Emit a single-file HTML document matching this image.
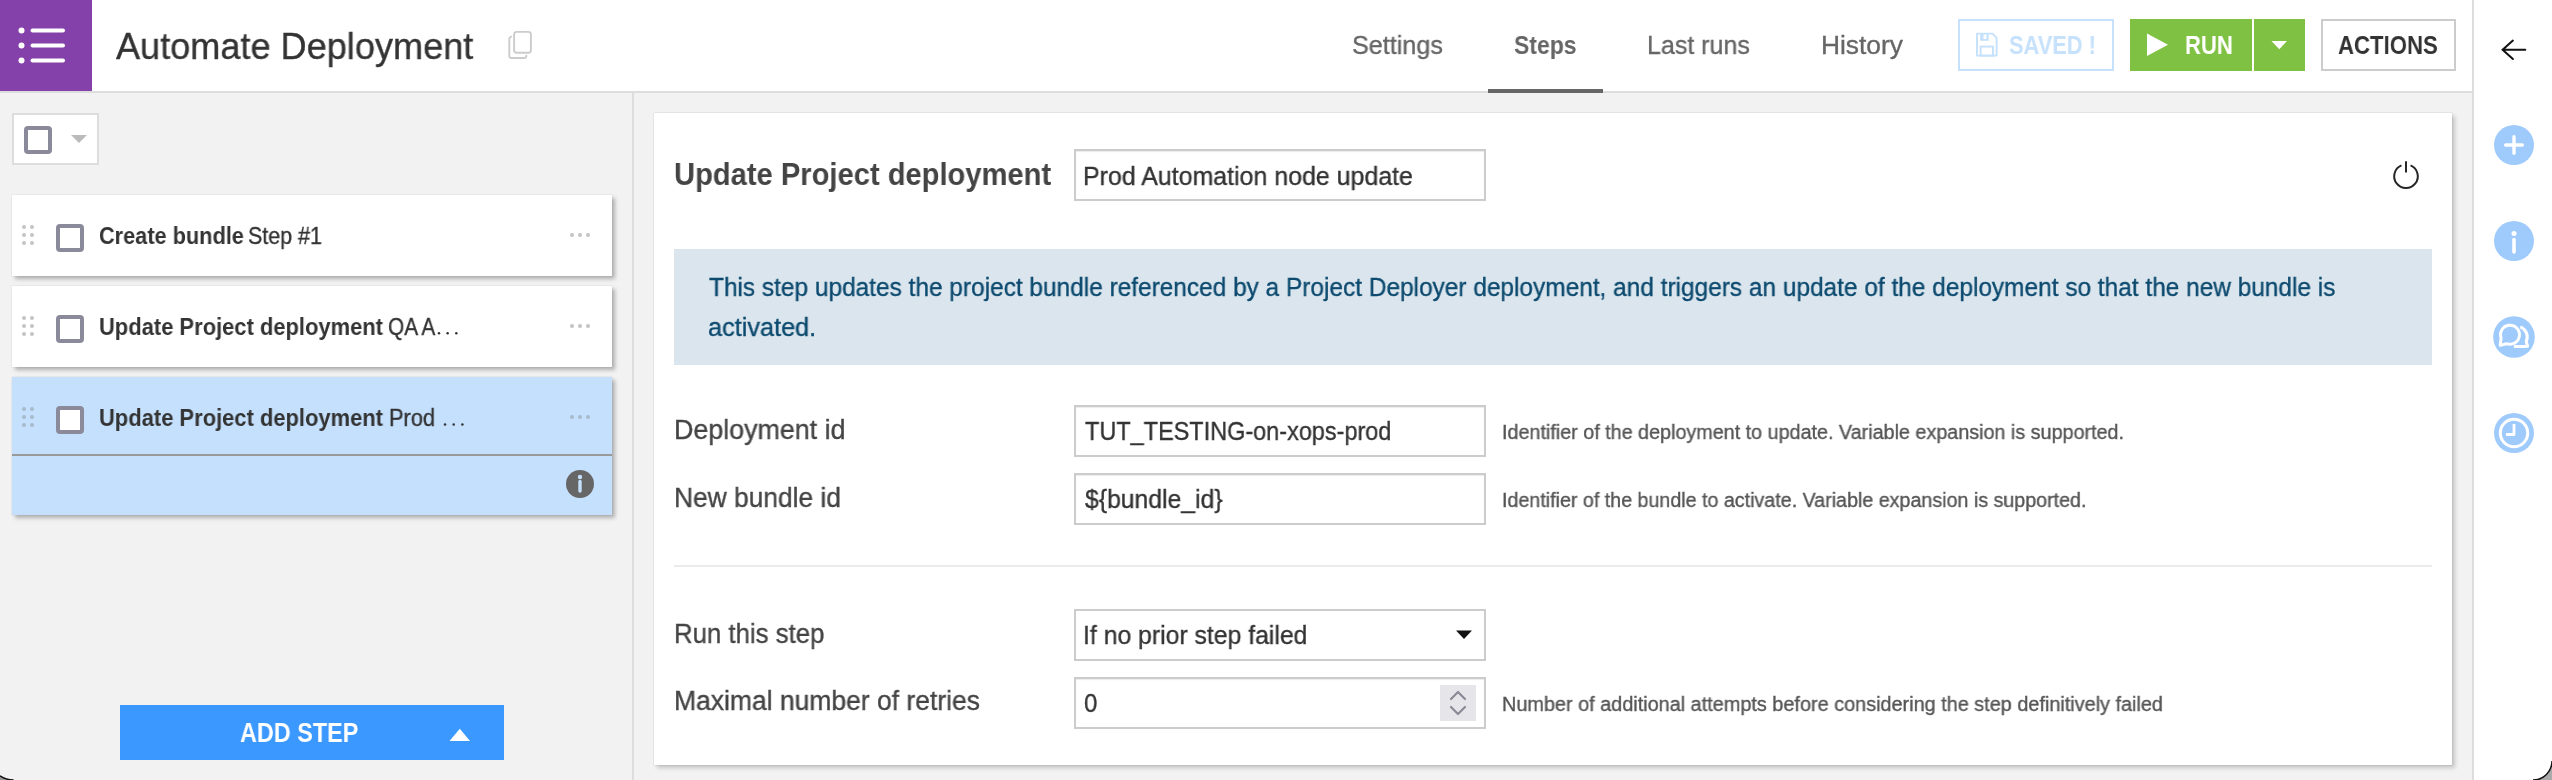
<!DOCTYPE html>
<html><head><meta charset="utf-8"><title>Automate Deployment</title>
<style>
*{box-sizing:border-box}
html,body{margin:0;padding:0}
body{width:2552px;height:780px;overflow:hidden;position:relative;background:#f2f2f2;font-family:"Liberation Sans",sans-serif}
.a{position:absolute}
.t{position:absolute;white-space:nowrap;transform-origin:0 0;will-change:transform;-webkit-text-stroke:0.35px currentColor}
.t b{font-weight:700;-webkit-text-stroke:0}
.bw{-webkit-text-stroke:0!important}
</style></head>
<body>
<!-- header -->
<div class="a" style="left:0;top:0;width:2472px;height:93px;background:#fff;border-bottom:2px solid #ddd"></div>
<div class="a" style="left:0;top:0;width:92px;height:91px;background:#8441a9"></div>
<svg class="a" style="left:0;top:0" width="92" height="91" viewBox="0 0 92 91">
 <g fill="#fff"><circle cx="21.5" cy="30.5" r="3"/><circle cx="21.5" cy="45.5" r="3"/><circle cx="21.5" cy="60.5" r="3"/></g>
 <g stroke="#fff" stroke-width="4" stroke-linecap="round"><line x1="32.5" y1="30.5" x2="63" y2="30.5"/><line x1="32.5" y1="45.5" x2="63" y2="45.5"/><line x1="32.5" y1="60.5" x2="63" y2="60.5"/></g>
</svg>
<!-- copy icon -->
<svg class="a" style="left:500px;top:24px" width="40" height="40" viewBox="0 0 40 40">
 <rect x="14.1" y="7.9" width="16.8" height="20.9" rx="2.5" fill="none" stroke="#ccc" stroke-width="1.9"/>
 <path d="M11.2 12.6 Q 9.3 13.2 9.3 15.2 V 32 Q 9.3 34 11.3 34 H 24.4 Q 26.3 34 26.4 31.6" fill="none" stroke="#ccc" stroke-width="1.9" stroke-linecap="round"/>
</svg>
<!-- tab underline -->
<div class="a" style="left:1488px;top:89px;width:115px;height:4px;background:#666"></div>
<!-- saved button -->
<div class="a" style="left:1958px;top:19px;width:156px;height:52px;border:2px solid #c5e1fb"></div>
<svg class="a" style="left:1974px;top:32px" width="26" height="26" viewBox="0 0 26 26">
 <path d="M3 1.6 H18.5 L22.6 5.8 V23.6 H3 Z" fill="none" stroke="#c5e1fb" stroke-width="1.9" stroke-linejoin="round"/>
 <rect x="6.2" y="2" width="8.5" height="6.8" fill="#c5e1fb"/>
 <rect x="9.5" y="2.5" width="3" height="4.5" fill="#fff"/>
 <rect x="6.6" y="14.6" width="12.4" height="9" fill="none" stroke="#c5e1fb" stroke-width="1.9"/>
</svg>
<!-- run button -->
<div class="a" style="left:2130px;top:19px;width:122px;height:52px;background:#7fc142"></div>
<div class="a" style="left:2254px;top:19px;width:51px;height:52px;background:#7fc142"></div>
<svg class="a" style="left:2146px;top:33px" width="24" height="24" viewBox="0 0 24 24"><path d="M1 0.5 L22 11.8 L1 23 Z" fill="#fff"/></svg>
<svg class="a" style="left:2271px;top:40px" width="17" height="10" viewBox="0 0 17 10"><path d="M0.5 1 H16 L8.3 9.3 Z" fill="#fff"/></svg>
<!-- actions -->
<div class="a" style="left:2321px;top:19px;width:135px;height:52px;border:2px solid #ccc"></div>
<!-- right sidebar -->
<div class="a" style="left:2472px;top:0;width:80px;height:780px;background:#fff;border-left:2px solid #ddd"></div>
<svg class="a" style="left:2498px;top:36px" width="32" height="28" viewBox="0 0 32 28">
 <path d="M4.8 13.8 H27.3 M14.9 4.6 L4.6 13.8 L14.9 23" fill="none" stroke="#111" stroke-width="2" stroke-linecap="round"/>
</svg>
<svg class="a" style="left:2492px;top:120px" width="44" height="340" viewBox="0 0 44 340">
 <g fill="#9fcafc"><circle cx="22" cy="25" r="20"/><circle cx="22" cy="121" r="20"/><circle cx="22" cy="217" r="20.8"/><circle cx="22" cy="313" r="20"/></g>
 <path d="M13.7 25 H30.3 M22 16.7 V33.3" stroke="#fff" stroke-width="3.4" stroke-linecap="round"/>
 <circle cx="22" cy="113.5" r="2.5" fill="#fff"/>
 <path d="M22 119.5 V132" stroke="#fff" stroke-width="3.6" stroke-linecap="round"/>
 <g fill="none" stroke="#fff" stroke-width="3" stroke-linejoin="round">
  <path d="M9.07 218.05 A9.5 9.5 0 1 1 14.75 223.7 L8.2 225.2 Z"/>
  <path d="M28.3 206.8 A10.8 10.8 0 0 1 34.2 221.5 L35.6 226.2 Q 28 226.6 21.8 226.2"/>
 </g>
 <circle cx="22" cy="313" r="13.7" fill="none" stroke="#fff" stroke-width="3"/>
 <path d="M22 304 V314.5 H14" fill="none" stroke="#fff" stroke-width="2.8" stroke-linejoin="round"/>
</svg>
<!-- left panel divider -->
<div class="a" style="left:632px;top:93px;width:2px;height:687px;background:#ddd"></div>
<!-- select all -->
<div class="a" style="left:12px;top:113px;width:87px;height:52px;background:#fff;border:2px solid #ddd"></div>
<div class="a" style="left:24px;top:126px;width:28px;height:28px;border:4px solid #8b8a9b;border-radius:4px;background:#fff"></div>
<svg class="a" style="left:71px;top:135px" width="16" height="8" viewBox="0 0 16 8"><path d="M0 0 H16 L8 8 Z" fill="#bbb"/></svg>
<!-- cards -->
<div class="a" style="left:12px;top:195px;width:600px;height:81px;background:#fff;box-shadow:3px 3px 4px rgba(0,0,0,.27),0 0 1px rgba(0,0,0,.2)"></div>
<div class="a" style="left:12px;top:286px;width:600px;height:81px;background:#fff;box-shadow:3px 3px 4px rgba(0,0,0,.27),0 0 1px rgba(0,0,0,.2)"></div>
<div class="a" style="left:12px;top:377px;width:600px;height:138px;background:#c4e0fd;box-shadow:3px 3px 4px rgba(0,0,0,.27),0 0 1px rgba(0,0,0,.2)"></div>
<div class="a" style="left:12px;top:454px;width:600px;height:2px;background:#999"></div>
<svg class="a" style="left:0;top:190px" width="620" height="330" viewBox="0 190 620 330">
 <g fill="#c4c4c4">
  <circle cx="24" cy="227" r="2"/><circle cx="32" cy="227" r="2"/><circle cx="24" cy="235" r="2"/><circle cx="32" cy="235" r="2"/><circle cx="24" cy="243" r="2"/><circle cx="32" cy="243" r="2"/>
  <circle cx="24" cy="318" r="2"/><circle cx="32" cy="318" r="2"/><circle cx="24" cy="326" r="2"/><circle cx="32" cy="326" r="2"/><circle cx="24" cy="334" r="2"/><circle cx="32" cy="334" r="2"/>
  <circle cx="572" cy="235" r="2"/><circle cx="580" cy="235" r="2"/><circle cx="588" cy="235" r="2"/>
  <circle cx="572" cy="326" r="2"/><circle cx="580" cy="326" r="2"/><circle cx="588" cy="326" r="2"/>
 </g>
 <g fill="#a7b9cb">
  <circle cx="24" cy="409" r="2"/><circle cx="32" cy="409" r="2"/><circle cx="24" cy="417" r="2"/><circle cx="32" cy="417" r="2"/><circle cx="24" cy="425" r="2"/><circle cx="32" cy="425" r="2"/>
  <circle cx="572" cy="417" r="2"/><circle cx="580" cy="417" r="2"/><circle cx="588" cy="417" r="2"/>
 </g>
 <circle cx="580" cy="484" r="14" fill="#666"/>
 <circle cx="580" cy="477" r="2.2" fill="#c4e0fd"/>
 <path d="M580 481.5 V491" stroke="#c4e0fd" stroke-width="3.4" stroke-linecap="round"/>
</svg>
<div class="a" style="left:56px;top:224px;width:28px;height:28px;border:4px solid #8b8a9b;border-radius:4px;background:#fff"></div>
<div class="a" style="left:56px;top:315px;width:28px;height:28px;border:4px solid #8b8a9b;border-radius:4px;background:#fff"></div>
<div class="a" style="left:56px;top:406px;width:28px;height:28px;border:4px solid #8b8a9b;border-radius:4px;background:#fff"></div>
<svg class="a" style="left:430px;top:320px" width="40" height="110" viewBox="430 320 40 110">
 <g fill="#333"><circle cx="439" cy="333.2" r="1.25"/><circle cx="447.6" cy="333.2" r="1.25"/><circle cx="456.3" cy="333.2" r="1.25"/>
 <circle cx="445" cy="424.4" r="1.25"/><circle cx="453.7" cy="424.4" r="1.25"/><circle cx="462.4" cy="424.4" r="1.25"/></g>
</svg>
<!-- add step -->
<div class="a" style="left:120px;top:705px;width:384px;height:55px;background:#3b98fe"></div>
<svg class="a" style="left:449px;top:728px" width="22" height="14" viewBox="0 0 22 14"><path d="M0.5 13 H21 L10.8 0.7 Z" fill="#fff"/></svg>
<!-- main card -->
<div class="a" style="left:654px;top:113px;width:1798px;height:652px;background:#fff;box-shadow:3px 3px 4px rgba(0,0,0,.18),0 0 1px rgba(0,0,0,.3)"></div>
<div class="a" style="left:1074px;top:149px;width:412px;height:52px;background:#fff;border:2px solid #ccc;box-shadow:inset 0 1px 1px rgba(0,0,0,.08)"></div>
<svg class="a" style="left:2388px;top:157px" width="36" height="36" viewBox="0 0 36 36">
 <path d="M13.47 8.4 A11.8 11.8 0 1 0 22.53 8.4" fill="none" stroke="#262626" stroke-width="2"/>
 <path d="M18 4.2 V15.4" stroke="#262626" stroke-width="2"/>
</svg>
<div class="a" style="left:674px;top:249px;width:1758px;height:116px;background:#dbe5ed"></div>
<div class="a" style="left:1074px;top:405px;width:412px;height:52px;background:#fff;border:2px solid #ccc;box-shadow:inset 0 1px 1px rgba(0,0,0,.08)"></div>
<div class="a" style="left:1074px;top:473px;width:412px;height:52px;background:#fff;border:2px solid #ccc;box-shadow:inset 0 1px 1px rgba(0,0,0,.08)"></div>
<div class="a" style="left:674px;top:565px;width:1758px;height:2px;background:#ebebeb"></div>
<div class="a" style="left:1074px;top:609px;width:412px;height:52px;background:#fff;border:2px solid #ccc"></div>
<svg class="a" style="left:1455px;top:629px" width="18" height="11" viewBox="0 0 18 11"><path d="M1 1.5 H17 L9 10 Z" fill="#111"/></svg>
<div class="a" style="left:1074px;top:677px;width:412px;height:52px;background:#fff;border:2px solid #ccc;box-shadow:inset 0 1px 1px rgba(0,0,0,.08)"></div>
<div class="a" style="left:1440px;top:685px;width:36px;height:36px;background:#e6e6ea"></div>
<svg class="a" style="left:1440px;top:685px" width="36" height="36" viewBox="0 0 36 36">
 <path d="M11 14 L18 7 L25 14 M11 22 L18 29 L25 22" fill="none" stroke="#8a8a96" stroke-width="2.2" stroke-linecap="round" stroke-linejoin="round"/>
</svg>
<!-- window corners -->
<svg class="a" style="left:0;top:764px" width="20" height="16" viewBox="0 764 20 16">
 <path d="M0 775.8 A 24 24 0 0 0 13.6 780 H0 Z" fill="#9a9a9a"/>
 <path d="M0 775.8 A 24 24 0 0 0 13.6 780" fill="none" stroke="#111" stroke-width="1.5"/>
</svg>
<svg class="a" style="left:2524px;top:752px" width="28" height="28" viewBox="2524 752 28 28">
 <path d="M2552 761 A 19 19 0 0 1 2533 780 H2552 Z" fill="#aaa"/>
 <path d="M2552 761 A 19 19 0 0 1 2533 780" fill="none" stroke="#111" stroke-width="1.5"/>
</svg>

<div id="t_title" class="t" style="left:116.00px;top:28.70px;font-size:36.5px;line-height:36.5px;font-weight:400;color:#333;transform:scaleX(0.9893)">Automate Deployment</div>
<div id="t_tab1" class="t" style="left:1352.03px;top:31.99px;font-size:26px;line-height:26px;font-weight:400;color:#666;transform:scaleX(0.9674)">Settings</div>
<div id="t_tab2" class="t bw" style="left:1514.12px;top:31.99px;font-size:26px;line-height:26px;font-weight:700;color:#666;transform:scaleX(0.8841)">Steps</div>
<div id="t_tab3" class="t" style="left:1647.08px;top:31.99px;font-size:26px;line-height:26px;font-weight:400;color:#666;transform:scaleX(0.9615)">Last runs</div>
<div id="t_tab4" class="t" style="left:1820.97px;top:31.99px;font-size:26px;line-height:26px;font-weight:400;color:#666;transform:scaleX(1.0127)">History</div>
<div id="t_saved" class="t bw" style="left:2009.16px;top:31.99px;font-size:26px;line-height:26px;font-weight:700;color:#c5e1fb;transform:scaleX(0.8400)">SAVED !</div>
<div id="t_run" class="t bw" style="left:2185.28px;top:31.99px;font-size:26px;line-height:26px;font-weight:700;color:#fff;transform:scaleX(0.8495)">RUN</div>
<div id="t_actions" class="t bw" style="left:2338.15px;top:31.99px;font-size:26px;line-height:26px;font-weight:700;color:#333;transform:scaleX(0.8522)">ACTIONS</div>
<div id="t_card1b" class="t bw" style="left:99.06px;top:224.53px;font-size:23px;line-height:23px;font-weight:700;color:#333;transform:scaleX(0.9447)">Create bundle</div>
<div id="t_card1r" class="t" style="left:248.43px;top:224.53px;font-size:23px;line-height:23px;font-weight:400;color:#333;transform:scaleX(0.9322)">Step #1</div>
<div id="t_card2b" class="t bw" style="left:99.05px;top:315.53px;font-size:23px;line-height:23px;font-weight:700;color:#333;transform:scaleX(0.9539)">Update Project deployment</div>
<div id="t_card2r" class="t" style="left:388.14px;top:315.53px;font-size:23px;line-height:23px;font-weight:400;color:#333;transform:scaleX(0.9035)">QA A</div>
<div id="t_card3b" class="t bw" style="left:99.05px;top:406.53px;font-size:23px;line-height:23px;font-weight:700;color:#333;transform:scaleX(0.9539)">Update Project deployment</div>
<div id="t_card3r" class="t" style="left:389.40px;top:406.53px;font-size:23px;line-height:23px;font-weight:400;color:#333;transform:scaleX(0.9490)">Prod</div>
<div id="t_addstep" class="t bw" style="left:240.13px;top:720.14px;font-size:27px;line-height:27px;font-weight:700;color:#fff;transform:scaleX(0.8667)">ADD STEP</div>
<div id="t_mtitle" class="t bw" style="left:674.12px;top:158.76px;font-size:31px;line-height:31px;font-weight:700;color:#444;transform:scaleX(0.9398)">Update Project deployment</div>
<div id="t_in1" class="t" style="left:1083.08px;top:162.99px;font-size:26px;line-height:26px;font-weight:400;color:#333;transform:scaleX(0.9589)">Prod Automation node update</div>
<div id="t_info1" class="t" style="left:709.00px;top:273.99px;font-size:26px;line-height:26px;font-weight:400;color:#0c4a6f;transform:scaleX(0.9393)">This step updates the project bundle referenced by a Project Deployer deployment, and triggers an update of the deployment so that the new bundle is</div>
<div id="t_info2" class="t" style="left:708.03px;top:313.99px;font-size:26px;line-height:26px;font-weight:400;color:#0c4a6f;transform:scaleX(0.9722)">activated.</div>
<div id="t_lab1" class="t" style="left:674.01px;top:417.14px;font-size:27px;line-height:27px;font-weight:400;color:#444;transform:scaleX(0.9941)">Deployment id</div>
<div id="t_lab2" class="t" style="left:674.05px;top:485.14px;font-size:27px;line-height:27px;font-weight:400;color:#444;transform:scaleX(0.9761)">New bundle id</div>
<div id="t_lab3" class="t" style="left:674.09px;top:621.14px;font-size:27px;line-height:27px;font-weight:400;color:#444;transform:scaleX(0.9549)">Run this step</div>
<div id="t_lab4" class="t" style="left:674.04px;top:688.14px;font-size:27px;line-height:27px;font-weight:400;color:#444;transform:scaleX(0.9806)">Maximal number of retries</div>
<div id="t_val1" class="t" style="left:1085.00px;top:417.99px;font-size:26px;line-height:26px;font-weight:400;color:#333;transform:scaleX(0.9024)">TUT_TESTING-on-xops-prod</div>
<div id="t_val2" class="t" style="left:1085.03px;top:485.99px;font-size:26px;line-height:26px;font-weight:400;color:#333;transform:scaleX(0.9512)">${bundle_id}</div>
<div id="t_val3" class="t" style="left:1083.09px;top:621.99px;font-size:26px;line-height:26px;font-weight:400;color:#333;transform:scaleX(0.9526)">If no prior step failed</div>
<div id="t_val4" class="t" style="left:1084.08px;top:689.99px;font-size:26px;line-height:26px;font-weight:400;color:#333;transform:scaleX(0.9231)">0</div>
<div id="t_help1" class="t" style="left:1502.02px;top:422.07px;font-size:20px;line-height:20px;font-weight:400;color:#555;transform:scaleX(0.9872)">Identifier of the deployment to update. Variable expansion is supported.</div>
<div id="t_help2" class="t" style="left:1502.03px;top:490.07px;font-size:20px;line-height:20px;font-weight:400;color:#555;transform:scaleX(0.9831)">Identifier of the bundle to activate. Variable expansion is supported.</div>
<div id="t_help4" class="t" style="left:1502.01px;top:694.07px;font-size:20px;line-height:20px;font-weight:400;color:#555;transform:scaleX(0.9925)">Number of additional attempts before considering the step definitively failed</div>
</body></html>
